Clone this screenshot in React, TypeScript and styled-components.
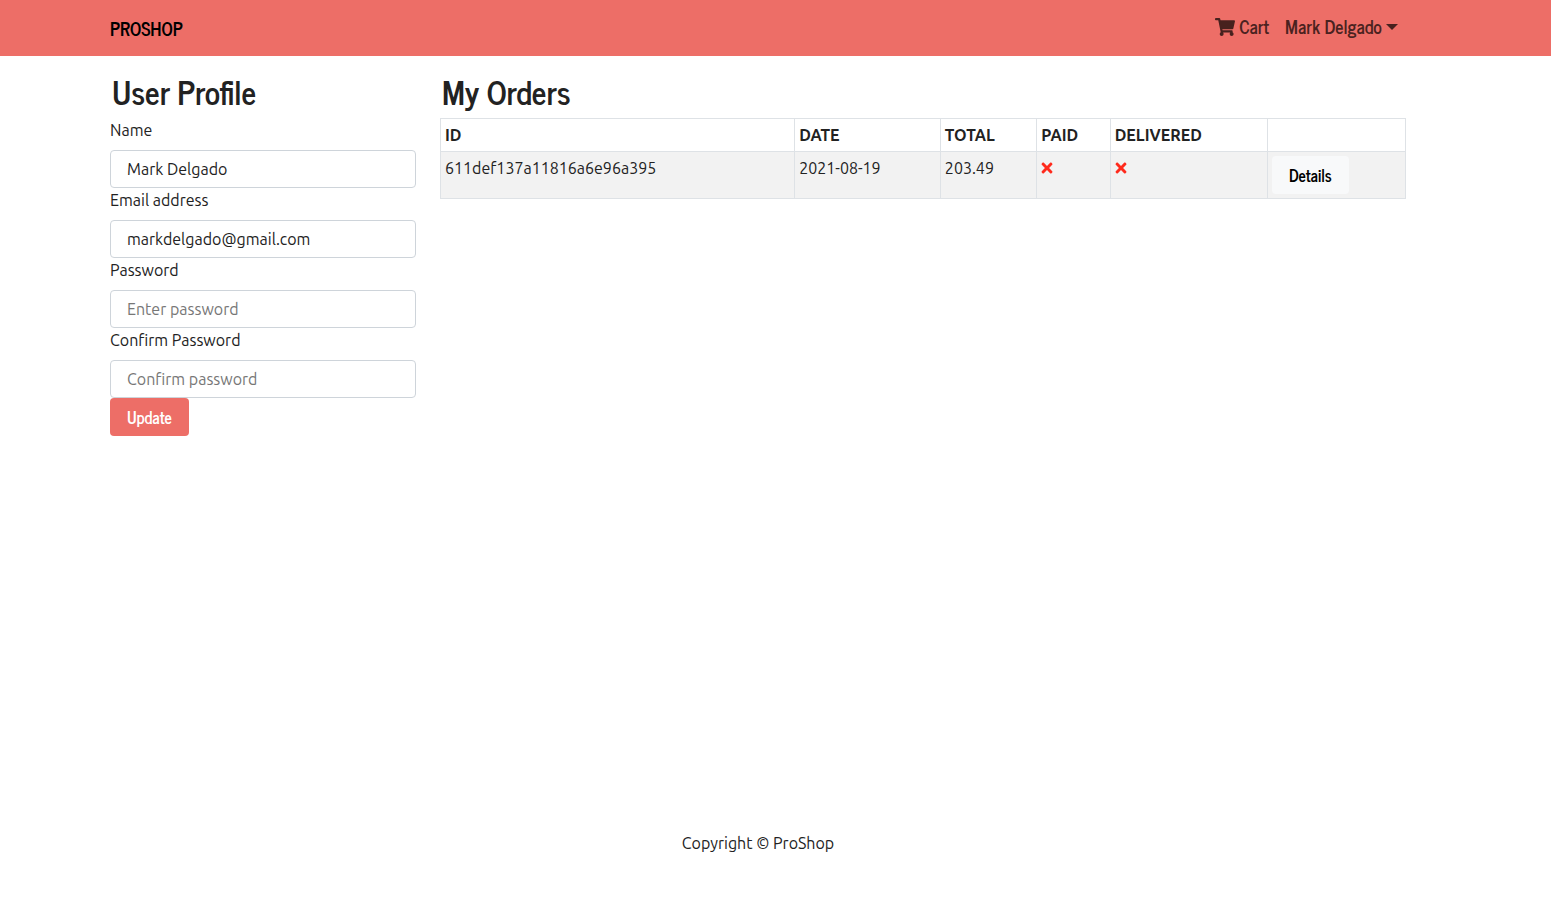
import React from "react";
import styled, { createGlobalStyle } from "styled-components";
import { FaShoppingCart, FaTimes } from "react-icons/fa";

const bodyFont = `Ubuntu, "Noto Sans", sans-serif`;
const headingFont = `"News Cycle", "Liberation Sans Narrow", "Arial Narrow", sans-serif`;
const primary = "#ed6e67";

const GlobalStyle = createGlobalStyle`
  *, *::before, *::after { box-sizing: border-box; }
  body {
    margin: 0;
    background: #fff;
    color: #222;
    font: 400 16px/24px ${bodyFont};
  }
`;

const Page = styled.div`
  display: flex;
  flex-direction: column;
  min-height: 100vh;
`;

const Band = styled.div`
  padding-right: 35px;
`;

const Container = styled.div`
  width: 100%;
  max-width: 1320px;
  margin: 0 auto;
  padding: 0 12px;
`;

const Header = styled(Band).attrs({ as: "header" })`
  background: ${primary};
`;

const NavBar = styled(Container).attrs({ as: "nav" })`
  display: flex;
  align-items: center;
  justify-content: space-between;
  height: 56px;
  font-family: ${headingFont};
  font-size: 18px;
  font-weight: 700;
`;

const Brand = styled.a`
  color: #000;
  text-decoration: none;
`;

const NavLinks = styled.div`
  display: flex;
  padding-bottom: 4px;
`;

const NavLink = styled.a`
  display: flex;
  align-items: center;
  gap: 4px;
  padding: 0 8px;
  color: rgba(0, 0, 0, 0.7);
  text-decoration: none;

  svg {
    margin-top: 2px;
  }
`;

const NavMenuButton = styled.button`
  display: flex;
  align-items: center;
  gap: 4px;
  padding: 0 8px;
  border: 0;
  background: none;
  color: rgba(0, 0, 0, 0.7);
  font: inherit;
`;

const Caret = styled.span`
  margin-top: 2px;
  border: 6px solid transparent;
  border-top-color: currentColor;
  border-bottom: 0;
`;

const Main = styled(Band).attrs({ as: "main" })`
  flex: 1;
  padding-top: 16px;
`;

const Columns = styled(Container)`
  display: grid;
  grid-template-columns: minmax(0, 306fr) minmax(0, 966fr);
  gap: 24px;
`;

const Title = styled.h2`
  margin: 0 0 8px;
  padding-left: 2px;
  font-family: ${headingFont};
  font-size: 32px;
  line-height: 38px;
  font-weight: 700;
`;

const Label = styled.label`
  display: block;
  margin-bottom: 8px;
`;

const Input = styled.input`
  display: block;
  width: 100%;
  height: 38px;
  padding: 0 16px;
  border: 1px solid #ced4da;
  border-radius: 4px;
  background: #fff;
  color: #222;
  font: inherit;
  &::placeholder {
    color: #777;
    opacity: 1;
  }
`;

const Button = styled.button<{ $light?: boolean }>`
  display: block;
  height: 38px;
  padding: 0 17px;
  border: 0;
  border-radius: 4px;
  background: ${(p) => (p.$light ? "#f8f9fa" : primary)};
  color: ${(p) => (p.$light ? "#000" : "#fff")};
  font-family: ${headingFont};
  font-size: 16px;
  font-weight: 700;
`;

const Table = styled.table`
  width: 100%;
  table-layout: fixed;
  border-collapse: collapse;
  text-align: left;
`;

const Col = styled.col<{ $share: number }>`
  width: ${(p) => p.$share}%;
`;

const Cell = styled.td`
  padding: 4px;
  border: 1px solid #dee2e6;
  vertical-align: top;
`;

const HeadCell = styled(Cell).attrs({ as: "th", scope: "col" })`
  font-weight: 700;
`;

const BodyRow = styled.tr`
  background: #f2f2f2;
`;

const Cross = styled(FaTimes)`
  display: block;
  margin: 4px 0 4px -2px;
  color: #ff2a1c;
`;

const Footer = styled(Band).attrs({ as: "footer" })`
  padding-top: 16px;
  padding-bottom: 48px;
  text-align: center;
`;

const fields = [
  { id: "name", label: "Name", type: "text", value: "Mark Delgado", hint: "Enter name" },
  { id: "email", label: "Email address", type: "email", value: "markdelgado@gmail.com", hint: "Enter email" },
  { id: "password", label: "Password", type: "password", value: "", hint: "Enter password" },
  { id: "confirm", label: "Confirm Password", type: "password", value: "", hint: "Confirm password" },
];

const columns = [
  { name: "ID", share: 36.7 },
  { name: "DATE", share: 15.1 },
  { name: "TOTAL", share: 10 },
  { name: "PAID", share: 7.6 },
  { name: "DELIVERED", share: 16.3 },
  { name: "", share: 14.3 },
];

const orders = [{ id: "611def137a11816a6e96a395", date: "2021-08-19", total: "203.49" }];

export default function App() {
  return (
    <Page>
      <GlobalStyle />
      <Header>
        <NavBar>
          <Brand href="#">PROSHOP</Brand>
          <NavLinks>
            <NavLink href="#cart">
              <FaShoppingCart size={20} /> Cart
            </NavLink>
            <NavMenuButton type="button" aria-haspopup="menu">
              Mark Delgado <Caret />
            </NavMenuButton>
          </NavLinks>
        </NavBar>
      </Header>
      <Main>
        <Columns>
          <section>
            <Title>User Profile</Title>
            <form onSubmit={(e) => e.preventDefault()}>
              {fields.map((f) => (
                <div key={f.id}>
                  <Label htmlFor={f.id}>{f.label}</Label>
                  <Input id={f.id} type={f.type} defaultValue={f.value} placeholder={f.hint} />
                </div>
              ))}
              <Button type="submit">Update</Button>
            </form>
          </section>
          <section>
            <Title>My Orders</Title>
            <Table>
              <colgroup>
                {columns.map((c) => (
                  <Col key={c.name} $share={c.share} />
                ))}
              </colgroup>
              <thead>
                <tr>
                  {columns.map((c) => (
                    <HeadCell key={c.name}>{c.name}</HeadCell>
                  ))}
                </tr>
              </thead>
              <tbody>
                {orders.map((o) => (
                  <BodyRow key={o.id}>
                    <Cell>{o.id}</Cell>
                    <Cell>{o.date}</Cell>
                    <Cell>{o.total}</Cell>
                    <Cell><Cross aria-label="Not paid" /></Cell>
                    <Cell><Cross aria-label="Not delivered" /></Cell>
                    <Cell><Button type="button" $light>Details</Button></Cell>
                  </BodyRow>
                ))}
              </tbody>
            </Table>
          </section>
        </Columns>
      </Main>
      <Footer>
        <Container>Copyright © ProShop</Container>
      </Footer>
    </Page>
  );
}
